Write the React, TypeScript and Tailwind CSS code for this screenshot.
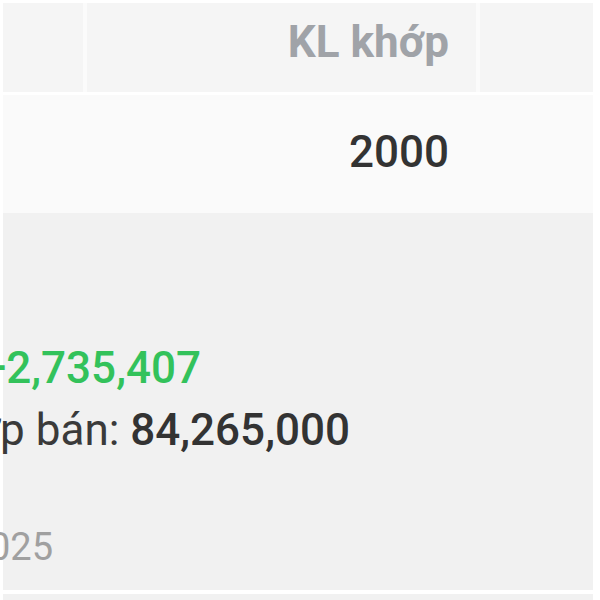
export default function App() {
  return (
    <div className="h-[600px] w-[600px] overflow-hidden bg-white pt-[3px] font-['Roboto','Liberation_Sans',sans-serif]">
      {/* Table */}
      <div className="ml-[3px] w-[590px]">
        {/* Header row */}
        <div className="flex h-[89px] gap-[4px] bg-[#fbfbfb]">
          <div className="w-[80px] bg-[#f5f5f5]" />
          <div className="flex w-[389px] justify-end bg-[#f5f5f5] pr-[27px] pt-[13px]">
            <span className="text-[44px] leading-[52px] font-bold text-[#a0a3a8]">KL khớp</span>
          </div>
          <div className="flex-1 bg-[#f5f5f5]" />
        </div>

        {/* Data row */}
        <div className="mt-[3px] flex h-[118px] bg-[#fafafa]">
          <div className="w-[84px]" />
          <div className="flex w-[389px] justify-end pr-[27px] pt-[31px]">
            <span className="text-[44px] leading-[52px] font-medium text-[#333333]">2000</span>
          </div>
        </div>
      </div>

      {/* Summary panel */}
      <div className="flex h-[377px] w-[593px] flex-col border-l-[3px] border-white bg-[#f1f1f1] pt-[129px]">
        <div className="flex w-[198px] justify-end whitespace-nowrap text-[44px] leading-[52px] font-medium text-[#33c25b]">
          Lãi/lỗ: +2,735,407
        </div>
        <div className="mt-[10px] flex w-[347px] justify-end whitespace-nowrap text-[44px] leading-[52px] text-[#3a3a3a]">
          <span>Giá trị khớp bán:&nbsp;</span>
          <span className="font-medium text-[#333333]">84,265,000</span>
        </div>
        <div className="mt-[69px] flex w-[50px] justify-end whitespace-nowrap text-[38px] leading-[44px] text-[#a0a0a0]">
          12/06/2025
        </div>
      </div>
      <div className="mt-[4px] ml-[3px] h-[10px] w-[590px] bg-[#f1f1f1]" />
    </div>
  );
}
